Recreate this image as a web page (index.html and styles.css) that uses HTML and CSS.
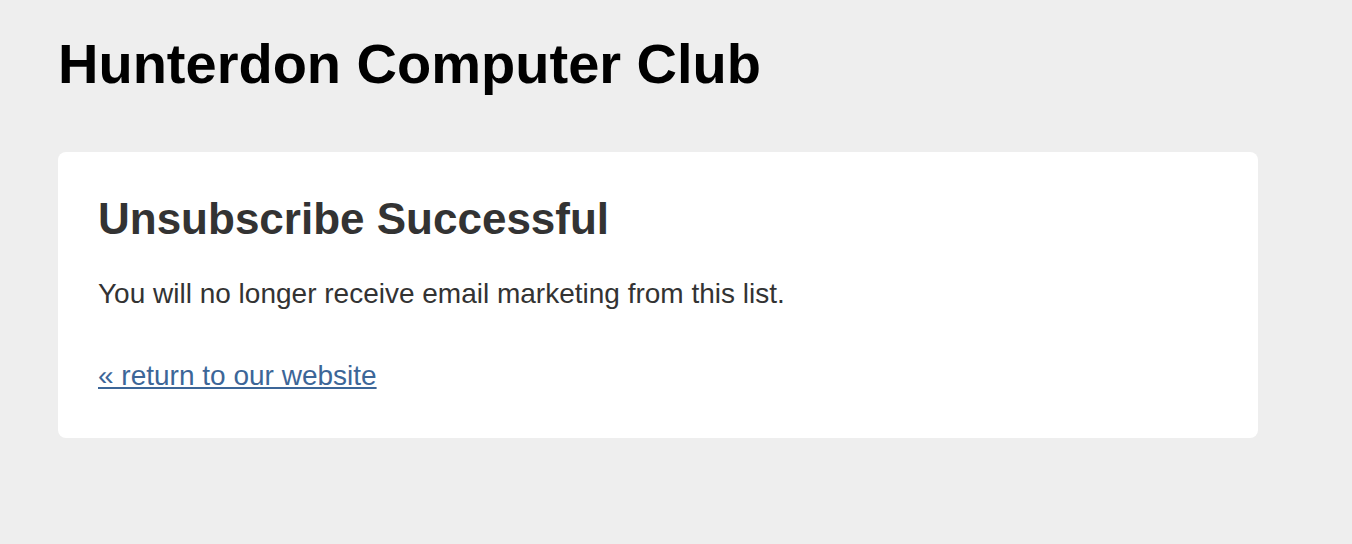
FILE: index.html
```html
<!DOCTYPE html>
<html lang="en">
<head>
    <meta charset="UTF-8">
    <title>Unsubscribe Successful</title>
    <link rel="stylesheet" href="styles.css">
</head>
<body>
    <div class="wrapper">
        <h1 class="club">Hunterdon Computer Club</h1>
        <div class="card">
            <h2>Unsubscribe Successful</h2>
            <p>You will no longer receive email marketing from this list.</p>
            <p class="back"><a href="#">&laquo; return to our website</a></p>
        </div>
    </div>
</body>
</html>
```

FILE: styles.css
```css
body {
    font-family: "Liberation Sans", Arial, sans-serif;
    margin: 0;
    padding: 0;
    background-color: #eeeeee;
    color: #333;
}
.wrapper {
    width: 1200px;
    padding: 28px 58px;
}
.club {
    color: #000;
    font-size: 56px;
    line-height: 72px;
    margin: 0 0 52px 0;
}
.card {
    background: #fff;
    border-radius: 8px;
    padding: 40px 40px 44px 40px;
}
.card h2 {
    font-size: 44px;
    line-height: 54px;
    margin: 0 0 30px 0;
}
.card p {
    font-size: 28px;
    line-height: 36px;
    margin: 0 0 46px 0;
}
.card p.back {
    margin: 0;
}
.back a {
    color: #3c6698;
}
```
